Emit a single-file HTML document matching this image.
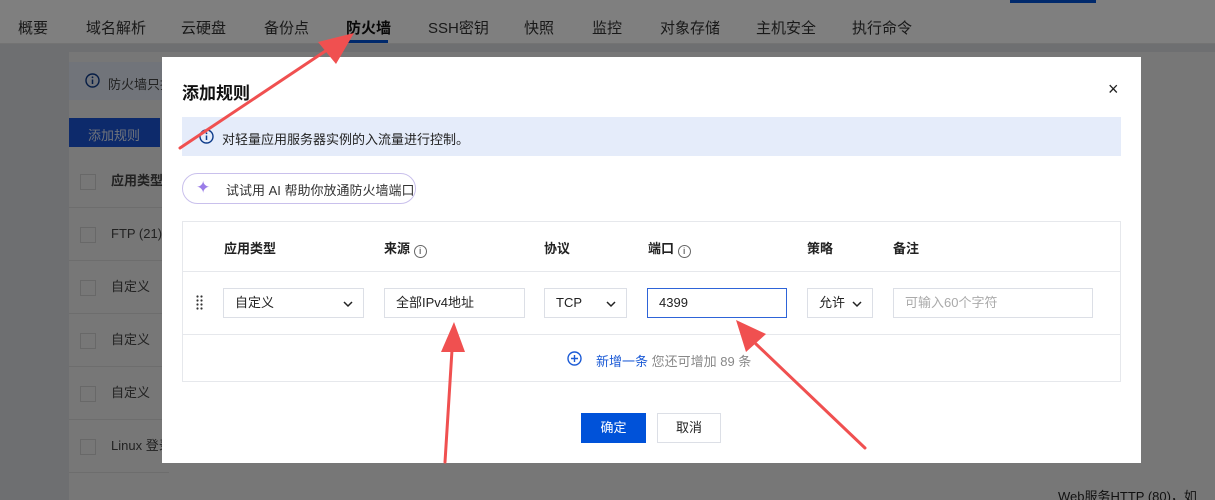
<!DOCTYPE html>
<html><head><meta charset="utf-8"><style>
*{margin:0;padding:0;box-sizing:border-box}
html,body{width:1215px;height:500px;overflow:hidden}
body{background:#dcdee2;font-family:"Liberation Sans","Noto Sans CJK SC",sans-serif;position:relative;font-size:13px;color:#222}
.a{position:absolute;white-space:nowrap}
.nav{left:0;top:0;width:1215px;height:44px;background:#fff;border-bottom:1px solid #e6e6e6}
.nav span{position:absolute;top:17px;font-size:15px;color:#333}
.panel{left:69px;top:52px;width:1146px;height:448px;background:#eeeeee}
.row{left:69px;width:100px;height:53px;border-bottom:1px solid #dadada}
.cb{position:absolute;left:11px;top:19px;width:16px;height:16px;border:1px solid #d0d0d0;background:#eee}
.row span{position:absolute;left:42px;top:18px;color:#444;font-size:13px;line-height:16px}
.ov{left:0;top:0;width:1215px;height:500px;background:rgba(0,0,0,0.5)}
.modal{left:162px;top:57px;width:979px;height:406px;background:#fff}
.sel{position:absolute;height:30px;border:1px solid #dcdfe6;background:#fff;font-size:13px;padding:0 11px;line-height:28px;color:#222}
.chev{position:absolute;right:10px;top:11px}
.ic{display:inline-block;width:13px;height:13px;border:1px solid #666;border-radius:50%;font-size:9px;text-align:center;line-height:11px;font-weight:normal;vertical-align:-1px}
</style></head><body>
<div class="a nav">
<span style="left:18px">概要</span><span style="left:86px">域名解析</span><span style="left:181px">云硬盘</span><span style="left:264px">备份点</span><span style="left:346px;font-weight:bold;color:#111">防火墙</span><span style="left:428px">SSH密钥</span><span style="left:524px">快照</span><span style="left:592px">监控</span><span style="left:660px">对象存储</span><span style="left:756px">主机安全</span><span style="left:852px">执行命令</span>
<div class="a" style="left:346px;top:40px;width:42px;height:3px;background:#0052d9"></div>
<div class="a" style="left:1010px;top:0;width:86px;height:3px;background:#0052d9"></div>
</div>
<div class="a panel"></div>
<div class="a" style="left:69px;top:62px;width:100px;height:38px;background:#e2e8f4"></div>
<svg class="a" style="left:85px;top:73px" width="15" height="15"><circle cx="7.5" cy="7.5" r="6.5" stroke="#0d3b8a" stroke-width="1.4" fill="none"/><path d="M7.5 6.5v4.5" stroke="#0d3b8a" stroke-width="1.5"/><circle cx="7.5" cy="4.3" r="0.9" fill="#0d3b8a"/></svg>
<div class="a" style="left:108px;top:74px;font-size:13px;color:#444">防火墙只持</div>
<div class="a" style="left:69px;top:118px;width:91px;height:29px;background:#1a55d6;color:#dfe6f6;font-size:13px;padding:7px 19px">添加规则</div>
<div class="a row" style="top:155px"><div class="cb"></div><span style="font-weight:bold">应用类型</span></div>
<div class="a row" style="top:208px"><div class="cb"></div><span>FTP (21)</span></div>
<div class="a row" style="top:261px"><div class="cb"></div><span>自定义</span></div>
<div class="a row" style="top:314px"><div class="cb"></div><span>自定义</span></div>
<div class="a row" style="top:367px"><div class="cb"></div><span>自定义</span></div>
<div class="a row" style="top:420px;overflow:hidden"><div class="cb"></div><span>Linux 登录</span></div>
<div class="a ov"></div>
<div class="a" style="left:1058px;top:486px;font-size:13px;color:#111">Web服务HTTP (80)，如</div>

<div class="a modal">
<div class="a" style="left:20px;top:22px;font-size:17px;font-weight:bold;color:#111">添加规则</div>
<div class="a" style="left:946px;top:22px;font-size:18px;color:#222">×</div>
<div class="a" style="left:20px;top:60px;width:939px;height:39px;background:#e5ecfa"></div>
<svg class="a" style="left:37px;top:72px" width="15" height="15"><circle cx="7.5" cy="7.5" r="6.5" stroke="#0d3b8a" stroke-width="1.4" fill="none"/><path d="M7.5 6.5v4.5" stroke="#0d3b8a" stroke-width="1.5"/><circle cx="7.5" cy="4.3" r="0.9" fill="#0d3b8a"/></svg>
<div class="a" style="left:60px;top:72px;font-size:13px;color:#222">对轻量应用服务器实例的入流量进行控制。</div>
<div class="a" style="left:20px;top:116px;width:234px;height:31px;border:1px solid #c9c0ec;border-radius:16px;background:#fff"></div>
<div class="a" style="left:34px;top:121px;font-size:17px;color:#9a7de8">✦</div>
<div class="a" style="left:64px;top:123px;font-size:13px;color:#333">试试用 AI 帮助你放通防火墙端口</div>
<div class="a" style="left:20px;top:164px;width:939px;height:161px;border:1px solid #e6e8ec"></div>
<div class="a" style="left:21px;top:214px;width:937px;height:1px;background:#e6e8ec"></div>
<div class="a" style="left:21px;top:277px;width:937px;height:1px;background:#e6e8ec"></div>
<div class="a" style="top:181px;left:62px;font-weight:bold;font-size:13px">应用类型</div>
<div class="a" style="top:181px;left:222px;font-weight:bold;font-size:13px">来源 <span class="ic">i</span></div>
<div class="a" style="top:181px;left:382px;font-weight:bold;font-size:13px">协议</div>
<div class="a" style="top:181px;left:486px;font-weight:bold;font-size:13px">端口 <span class="ic">i</span></div>
<div class="a" style="top:181px;left:645px;font-weight:bold;font-size:13px">策略</div>
<div class="a" style="top:181px;left:731px;font-weight:bold;font-size:13px">备注</div>
<svg class="a" style="left:34px;top:238px" width="8" height="16"><g fill="#333"><circle cx="1.5" cy="1.5" r="1.1"/><circle cx="5.5" cy="1.5" r="1.1"/><circle cx="1.5" cy="5.5" r="1.1"/><circle cx="5.5" cy="5.5" r="1.1"/><circle cx="1.5" cy="9.5" r="1.1"/><circle cx="5.5" cy="9.5" r="1.1"/><circle cx="1.5" cy="13.5" r="1.1"/><circle cx="5.5" cy="13.5" r="1.1"/></g></svg>
<div class="sel" style="left:61px;top:231px;width:141px">自定义<svg class="chev" width="10" height="8"><path d="M1 2l4 4 4-4" stroke="#222" stroke-width="1.5" fill="none"/></svg></div>
<div class="sel" style="left:222px;top:231px;width:141px">全部IPv4地址</div>
<div class="sel" style="left:382px;top:231px;width:83px">TCP<svg class="chev" width="10" height="8"><path d="M1 2l4 4 4-4" stroke="#222" stroke-width="1.5" fill="none"/></svg></div>
<div class="sel" style="left:485px;top:231px;width:140px;border-color:#2e64d8">4399</div>
<div class="sel" style="left:645px;top:231px;width:66px">允许<svg class="chev" width="10" height="8"><path d="M1 2l4 4 4-4" stroke="#222" stroke-width="1.5" fill="none"/></svg></div>
<div class="sel" style="left:731px;top:231px;width:200px;color:#aaa">可输入60个字符</div>
<svg class="a" style="left:405px;top:294px" width="15" height="15"><circle cx="7.5" cy="7.5" r="6.5" stroke="#1c5bd6" stroke-width="1.4" fill="none"/><path d="M7.5 4v7M4 7.5h7" stroke="#1c5bd6" stroke-width="1.4"/></svg>
<div class="a" style="left:434px;top:294px;font-size:13px;color:#1c5bd6">新增一条 <span style="color:#888">您还可增加 89 条</span></div>
<div class="a" style="left:419px;top:356px;width:65px;height:30px;background:#0052d9;color:#fff;font-size:13px;text-align:center;line-height:30px">确定</div>
<div class="a" style="left:495px;top:356px;width:64px;height:30px;border:1px solid #dcdfe6;font-size:13px;text-align:center;line-height:28px">取消</div>
</div>

<svg class="a" style="left:0;top:0" width="1215" height="500">
<g stroke="#f05050" stroke-width="3" fill="#f05050" stroke-linecap="round">
<line x1="180" y1="148" x2="330" y2="48"/><polygon points="354,33 318,42 336,64" stroke="none"/>
<line x1="445" y1="462" x2="452" y2="350"/><polygon points="454,322 441,352 465,352" stroke="none"/>
<line x1="865" y1="448" x2="756" y2="344"/><polygon points="736,320 746,352 766,334" stroke="none"/>
</g></svg>
</body></html>
